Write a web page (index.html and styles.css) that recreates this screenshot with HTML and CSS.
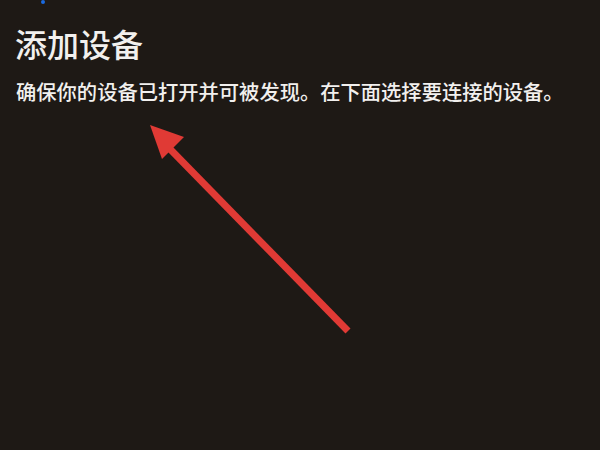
FILE: index.html
```html
<!DOCTYPE html>
<html lang="zh-CN">
<head>
<meta charset="utf-8">
<link rel="stylesheet" href="styles.css">
</head>
<body>
<div class="page">
  <span class="dot"></span>
  <h1 class="title">添加设备</h1>
  <p class="desc">确保你的设备已打开并可被发现。在下面选择要连接的设备。</p>
  <svg class="arrow" width="600" height="450" viewBox="0 0 600 450">
    <line x1="348" y1="331" x2="170" y2="149" stroke="#e03a35" stroke-width="7" stroke-linecap="butt"/>
    <polygon points="150,125 184,137 162,159" fill="#e03a35"/>
  </svg>
</div>
</body>
</html>
```
FILE: styles.css
```css
html, body {
  margin: 0;
  padding: 0;
  background: #1e1915;
}
.page {
  position: relative;
  width: 600px;
  height: 450px;
  overflow: hidden;
  background: #1e1915;
  font-family: "Noto Sans CJK SC", "Noto Sans", sans-serif;
  color: #f2f0ee;
  padding: 23px 0 0 15px;
  box-sizing: border-box;
}
.dot {
  position: absolute;
  left: 41px;
  top: 0;
  width: 4px;
  height: 4px;
  border-radius: 2px;
  background: #1a6ae0;
}
.title {
  margin: 0;
  font-size: 32px;
  font-weight: 500;
  line-height: 40px;
}
.desc {
  margin: 15px 0 0 1px;
  font-size: 20.3px;
  font-weight: 500;
  line-height: 26px;
  letter-spacing: 0;
}
.arrow {
  position: absolute;
  left: 0;
  top: 0;
}
```
